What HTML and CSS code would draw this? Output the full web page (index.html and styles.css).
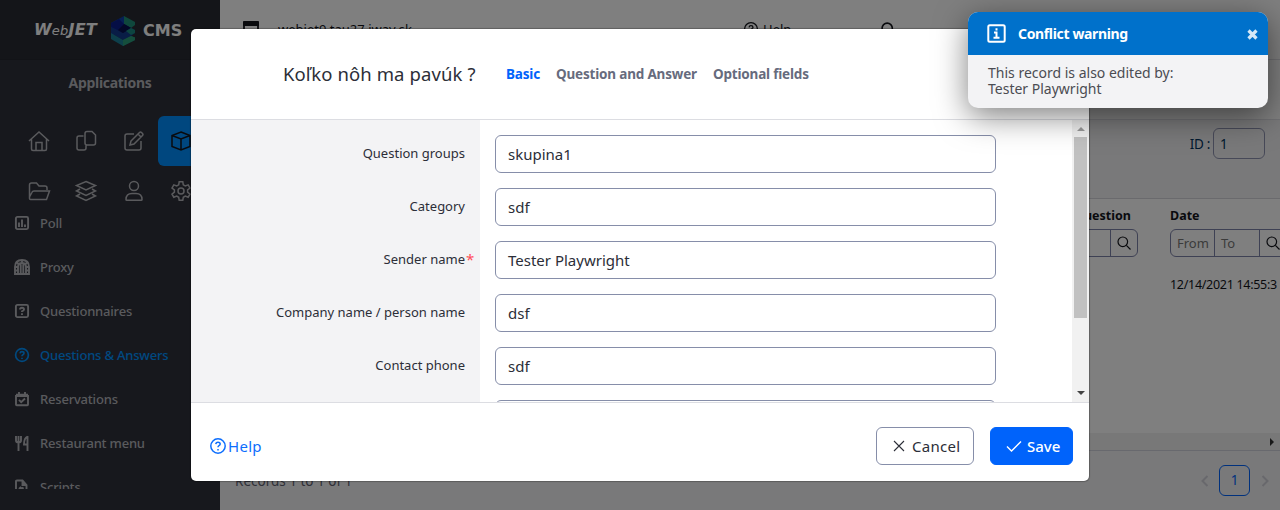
FILE: index.html
```html
<!DOCTYPE html>
<html lang="en">
<head>
<meta charset="utf-8">
<title>WebJET CMS</title>
<link rel="stylesheet" href="styles.css">
</head>
<body>
<svg class="defs" aria-hidden="true">
  <symbol id="help" viewBox="0 0 18 18"><circle cx="9" cy="9" r="7.2"/><path d="M6.800 7.100Q7 5.200 9 5.200Q11.200 5.200 11.200 7Q11.200 8.100 10 8.700Q9 9.200 9 10.300M9 12v1.500"/></symbol>
  <symbol id="search" viewBox="0 0 14 14"><circle cx="5.8" cy="5.8" r="4.8"/><path d="m9.400 9.400 4.100 4.100"/></symbol>
</svg>
<div class="page">
  <aside class="sidebar">
    <div class="logo">
      <span class="logo-web">W<small>eb</small>JET</span>
      <svg class="logo-mark" width="26" height="31" viewBox="0 0 26 31"><path fill="#0a3fa8" d="M1 8 14 1v8L1 23z"/><path fill="#1f8f78" d="m14 1 11 6v3l-4 3-7-4z"/><path fill="#0a1c8c" d="m1 8 8-4 5 5 7 4-8 5-12-6z"/><path fill="#123a8c" d="m1 12 12 6 8-5 4 2v3l-4 3-8 4-12-7z"/><path fill="#06104f" d="m8 15 6-6 7 4-8 5z"/><path fill="#1b8a80" d="m16 16 5-3 4 2v3l-4 2z"/><path fill="#1a7f96" d="m1 18 12 7 8-4 4 1.500V25l-12 6-12-7z"/><path fill="#2a9c78" d="m13 25 8-4 4 1.500V25l-12 6z"/></svg>
      <span class="logo-cms">CMS</span>
    </div>
    <div class="side-title">Applications</div>
    <div class="tiles">
      <span class="tile"><svg width="24" height="24" viewBox="0 0 24 24"><path d="m2 12 10-9 10 9M4.500 10v10q0 1.500 1.500 1.500h12q1.500 0 1.500-1.500V10M9 21v-7.500h6V21"/></svg></span>
      <span class="tile"><svg width="24" height="24" viewBox="0 0 24 24"><path d="M9.500 7H5Q3 7 3 9v10q0 2 2 2h5q2 0 2-2v-2.500M13 2.500h5l3.500 3.500v8q0 2-2 2H13q-2 0-2-2V4.500q0-2 2-2z"/></svg></span>
      <span class="tile"><svg width="24" height="24" viewBox="0 0 24 24"><path d="M12 5H5Q3 5 3 7v12q0 2 2 2h12q2 0 2-2v-7M9 12l8.500-8.500q1-1 2 0l1 1q1 1 0 2L12 15l-4 1zM16 5l3 3"/></svg></span>
      <span class="tile tile-active"><svg width="24" height="24" viewBox="0 0 24 24"><path d="m12 3 9 3.500v11L12 21l-9-3.500v-11zM3 6.500l9 3.500 9-3.500M12 10v11"/></svg></span>
      <span class="tile"><svg width="24" height="24" viewBox="0 0 24 24"><path d="M2.500 18V6q0-2 2-2h5l2.500 3h6q2 0 2 2v2M2.500 18v1.500q0 1 1 1h16L22.500 12H7q-1.500 0-2 1.300z"/></svg></span>
      <span class="tile"><svg width="24" height="24" viewBox="0 0 24 24"><path d="m12 2.500 9.500 4L12 11 2.500 6.500zM6 10l-3.500 2 9.500 4.500 9.500-4.500L18 10M6 15l-3.500 2 9.500 4.500 9.500-4.500L18 15"/></svg></span>
      <span class="tile"><svg width="24" height="24" viewBox="0 0 24 24"><circle cx="12" cy="7" r="4.500"/><path d="M4 20.500q0-6 6-6h4q6 0 6 6 0 .8-.8.8H4.800q-.8 0-.8-.8z"/></svg></span>
      <span class="tile"><svg width="24" height="24" viewBox="0 0 24 24"><circle cx="12" cy="12" r="3"/><path d="M10.200 2.800h3.600l.5 3 2 1.200 2.900-1.100 1.800 3.100-2.400 1.900v2.300l2.400 1.900-1.800 3.100-2.900-1.100-2 1.200-.5 3h-3.600l-.5-3-2-1.200-2.900 1.100L3 15.100l2.400-1.900v-2.300L3 9l1.800-3.100L7.700 7l2-1.200z"/></svg></span>
    </div>
    <nav class="apps">
      <a class="app"><svg width="16" height="16" viewBox="0 0 16 16"><rect x="1.900" y="1.900" width="12.200" height="12.200" rx="1.500"/><path d="M5 7.500V12M8 4.500V12M11 9.500V12"/></svg>Poll</a>
      <a class="app"><svg width="16" height="16" viewBox="0 0 16 16"><path d="M1 15V8q0-7 7-7t7 7v7zM4 15V8q0-4 4-4t4 4v7M6.700 5v10M9.300 5v10M1 8h3M1 11.500h3M12 8h3M12 11.500h3M3 3.500l2 2M13 3.500l-2 2M8 1v3"/></svg>Proxy</a>
      <a class="app"><svg width="16" height="16" viewBox="0 0 16 16"><rect x="1.900" y="1.900" width="12.200" height="12.200" rx="1.500"/><path d="M6 6.500Q6 4.800 8 4.800t2 1.700Q10 7.600 8 8.300V9M8 10.300V12"/></svg>Questionnaires</a>
      <a class="app app-active"><svg width="16" height="16" viewBox="0 0 18 18"><use href="#help"/></svg>Questions &amp; Answers</a>
      <a class="app"><svg width="16" height="16" viewBox="0 0 16 16"><path d="M2 5v8.500q0 .7.700.7h10.600q.7 0 .7-.7V5zM5 8.800l2.200 2.300L11 7.500"/><path d="M2 3.700h12M5 1v4M11 1v4"/></svg>Reservations</a>
      <a class="app"><svg width="16" height="16" viewBox="0 0 16 16"><path d="M2 1v4.500q0 2 2.500 2T7 5.500V1M4.500 1v15M13.500 1v15M13.500 1.500Q10 3 10 9.500h3"/></svg>Restaurant menu</a>
      <a class="app"><svg width="16" height="16" viewBox="0 0 16 16"><path d="M2 14V2.500q0-1 1-1h5.500L12.500 6v8q0 1-1 1H3q-1 0-1-1zM8.500 1.500V6h4M5 10l1.500-1.500L8 10l1.500-1.500"/></svg>Scripts</a>
    </nav>
  </aside>
  <main class="main">
    <header class="topbar">
      <svg class="window-icon" width="16" height="16" viewBox="0 0 16 16"><rect x="1" y="1" width="14" height="14" rx="1"/><path class="solid" d="M0 1q0-1 1-1h14q1 0 1 1v4H0z"/></svg>
      <span class="domain">webjet9.tau27.iway.sk</span>
      <svg class="top-help" width="16" height="16"><use href="#help"/></svg>
      <span>Help</span>
      <svg class="top-search" width="15" height="15"><use href="#search"/></svg>
    </header>
    <div class="breadcrumb"></div>
    <div class="toolbar"><label>ID :</label><span class="id-box">1</span></div>
    <section class="table">
      <div class="col col-question">
        <b>Question</b>
        <div class="filter"><span class="seg seg-q"></span><span class="seg seg-icon"><svg width="14" height="14"><use href="#search"/></svg></span></div>
      </div>
      <div class="col col-date">
        <b>Date</b>
        <div class="filter"><span class="seg seg-from">From</span><span class="seg seg-to">To</span><span class="seg seg-icon"><svg width="14" height="14"><use href="#search"/></svg></span></div>
        <div class="date">12/14/2021 14:55:3</div>
      </div>
    </section>
    <div class="hscroll"><svg width="5" height="8" viewBox="0 0 5 8"><path d="M0 0v8l4-4z"/></svg></div>
    <footer class="pager">
      <span class="records">Records 1 to 1 of 1</span>
      <svg class="chev" width="8" height="12" viewBox="0 0 8 12"><path d="M6.500 1 1.500 6l5 5"/></svg>
      <span class="page-no">1</span>
      <svg class="chev" width="8" height="12" viewBox="0 0 8 12"><path d="m1.500 1 5 5-5 5"/></svg>
    </footer>
  </main>
</div>
<div class="backdrop">
  <div class="modal">
    <header class="modal-head">
      <h5>Koľko nôh ma pavúk ?</h5>
      <span class="tab tab-active">Basic</span><span class="tab tab-question">Question and Answer</span><span class="tab">Optional fields</span>
    </header>
    <div class="modal-body">
      <div class="form">
        <div class="row"><label>Question groups</label><div class="input">skupina1</div></div>
        <div class="row"><label>Category</label><div class="input">sdf</div></div>
        <div class="row"><label>Sender name<i class="star">*</i></label><div class="input">Tester Playwright</div></div>
        <div class="row"><label>Company name / person name</label><div class="input">dsf</div></div>
        <div class="row"><label>Contact phone</label><div class="input">sdf</div></div>
        <div class="row"><label></label><div class="input"></div></div>
      </div>
      <div class="vscroll"><svg width="8" height="4" viewBox="0 0 8 4"><path fill="#999" d="m0 4 4-4 4 4z"/></svg><div class="thumb"></div><svg width="8" height="4" viewBox="0 0 8 4"><path fill="#444" d="m0 0 4 4 4-4z"/></svg></div>
    </div>
    <footer class="modal-foot">
      <a class="help"><svg width="18" height="18"><use href="#help"/></svg>Help</a>
      <span class="btn btn-cancel"><svg width="12" height="12" viewBox="0 0 12 12"><path d="m1 1 10 10M11 1 1 11"/></svg>Cancel</span>
      <span class="btn btn-save"><svg width="16" height="12" viewBox="0 0 16 12"><path d="m1 6.500 4.500 4.500L15 1.500"/></svg>Save</span>
    </footer>
  </div>
</div>
<div class="toast">
  <div class="toast-head">
    <svg width="19" height="19" viewBox="0 0 19 19"><rect x="1.300" y="1.300" width="16.400" height="16.400" rx="1.500"/><path d="M7 8.500h2.500v4.800M6.500 13.800h6M9.500 4.200v2.300"/></svg>
    <b>Conflict warning</b>
    <svg class="close" width="11" height="11" viewBox="0 0 11 11"><path d="m1.500 1.500 8 8M9.500 1.500l-8 8"/></svg>
  </div>
  <div class="toast-body">This record is also edited by:<br>Tester Playwright</div>
</div>
</body>
</html>
```
FILE: styles.css
```css
* { box-sizing: border-box; }
body { margin: 0; height: 510px; overflow: hidden; font: 13px/20px "Noto Sans", "Open Sans", sans-serif; color: #13151b; }
svg { fill: none; stroke: currentColor; stroke-width: 1.5; flex: none; }
.defs { position: absolute; width: 0; height: 0; }

.page { display: flex; width: 1280px; height: 510px; }
.sidebar { width: 220px; background: #2e303a; color: #b4b5ba; flex: none; overflow: hidden; }
.logo { height: 60px; background: #292b33; border-bottom: 1px solid #25272e; display: flex; align-items: center; padding: 2px 0 0 34px; color: #fff; font: bold 16px/20px "DejaVu Sans", sans-serif; }
.logo-web { width: 76px; font-style: italic; letter-spacing: .2px; white-space: nowrap; }
.logo-web small { font-size: 13px; font-weight: 400; }
.logo-mark { stroke: none; }
.logo-cms { padding-left: 7px; letter-spacing: .1px; }
.side-title { height: 56px; padding-top: 13px; text-align: center; font-weight: bold; font-size: 14px; letter-spacing: -.3px; }
.tiles { display: grid; grid-template-columns: repeat(4, 47.5px); grid-template-rows: 50px 48px; margin-left: 15px; }
.tile { height: 50px; display: flex; align-items: center; justify-content: center; border-radius: 6px; }
.tile-active { background: #008fff; color: #13151b; }
.apps { height: 288px; margin-top: -13px; overflow: hidden; }
.app { height: 44px; display: flex; align-items: center; gap: 10px; padding-left: 14px; font-weight: 500; font-size: 13px; letter-spacing: -.2px; }
.app svg { stroke-width: 1.9; }
.app-active { color: #0092ff; }

.main { width: 1060px; background: #fff; overflow: hidden; }
.topbar { height: 60px; border-bottom: 1px solid #e0e0e6; display: flex; align-items: center; padding: 0 0 1px 23px; }
.window-icon { stroke-width: 1.8; }
.solid { fill: currentColor; stroke: none; }
.domain { margin-left: 19px; width: 465px; }
.top-help { margin-right: 4px; }
.top-search { margin-left: 90px; }
.breadcrumb { height: 60px; border-bottom: 1px solid #e0e0e6; }
.toolbar { height: 79px; background: #f3f3f5; border-bottom: 1px solid #d4d4da; display: flex; justify-content: flex-end; padding: 8px 15px 0 0; line-height: 32px; color: #00335f; font-size: 13.5px; }
.toolbar label { letter-spacing: -.3px; }
.id-box { width: 52px; height: 31px; border: 1px solid #8f93b0; border-radius: 6px; margin-left: 3px; padding-left: 6px; line-height: 30px; }
.table { height: 234px; display: flex; padding: 7px 0 0 851px; }
.col { flex: none; }
.col-question { width: 99px; }
.col-question b { padding-left: 3px; }
.col b { display: block; font-size: 12.5px; }
.filter { display: flex; margin-top: 3px; height: 28px; border: 1px solid #7d82a8; border-radius: 6px; width: max-content; color: #777; }
.seg { border-right: 1px solid #7d82a8; padding-left: 6px; line-height: 27px; }
.seg-q { width: 39px; }
.seg-icon { width: 26px; border: 0; padding: 6px 0 0 6px; line-height: 0; color: #13151b; }
.seg-icon svg { stroke-width: 1.2; }
.seg-from { width: 44px; }
.seg-to { width: 45px; }
.date { padding-top: 18px; font-size: 12.5px; line-height: 20px; letter-spacing: -.3px; }
.hscroll { height: 17px; background: #f1f1f1; padding: 5px 5px 0 0; display: flex; justify-content: flex-end; }
.hscroll svg { stroke: none; fill: #333; }
.pager { height: 60px; background: #f3f3f5; border-top: 1px solid #d0d2dd; display: flex; align-items: center; padding: 0 11px 0 15px; color: #5f6170; font-size: 13.5px; }
.records { flex: 1; }
.page-no { width: 31px; height: 31px; border: 1px solid #0063fb; border-radius: 6px; color: #0063fb; text-align: center; line-height: 29px; margin: 0 11px 0 10px; }
.chev { color: #d0d0d8; stroke-width: 2; }

.backdrop { position: absolute; inset: 0; background: rgba(0, 0, 0, .5); padding: 29px 0 0 191px; }
.modal { width: 898px; height: 452px; background: #fff; border-radius: 5px; overflow: hidden; box-shadow: 0 0 1px 1px rgba(0, 0, 0, .25); color: #2c2e38; }
.modal-head { height: 91px; border-bottom: 1px solid #dcdde2; display: flex; align-items: center; padding-left: 92px; }
.modal-head h5 { margin: 0; width: 223px; font-weight: 400; font-size: 18.5px; letter-spacing: .1px; white-space: nowrap; }
.tab { font-size: 13.5px; font-weight: bold; color: #666b7d; margin-right: 16px; letter-spacing: -.18px; }
.tab-active { color: #0063fb; }
.modal-body { height: 282px; display: flex; overflow: hidden; }
.form { width: 881px; padding-top: 15px; background: linear-gradient(90deg, #f3f3f5 289px, #fff 289px); height: 340px; }
.row { height: 53px; display: flex; }
.row label { width: 274px; margin-right: 30px; padding-top: 8px; text-align: right; white-space: nowrap; }
.star { position: absolute; padding-left: 1px; color: #ff4b58; font-style: normal; font-size: 15px; line-height: 20px; }
.input { width: 501px; height: 38px; border: 1px solid #868ea9; border-radius: 6px; padding-left: 12px; font-size: 15px; line-height: 37px; }
.vscroll { width: 17px; height: 282px; background: #f1f1f1; display: flex; flex-direction: column; align-items: center; padding: 7px 0; }
.vscroll svg { stroke: none; }
.thumb { width: 13px; height: 181px; margin: 6px 0 73px; background: #c1c1c1; flex: none; }
.modal-foot { height: 79px; border-top: 1px solid #dcdde2; display: flex; padding: 24px 16px 0 18px; font-size: 15px; line-height: 38px; }
.help { display: flex; align-items: center; height: 38px; gap: 1px; flex: 1; color: #0d6efd; letter-spacing: .3px; }
.btn { height: 38px; border: 1px solid #868ea9; border-radius: 6px; display: flex; align-items: center; }
.btn svg { stroke-width: 1.1; }
.btn-cancel { width: 98px; margin-right: 16px; padding-left: 16px; gap: 7px; letter-spacing: .3px; }
.btn-save { width: 83px; padding-left: 15px; gap: 5px; background: #0063fb; border-color: #0063fb; color: #fff; font-weight: 500; }
.btn-save svg { stroke-width: 1.4; }

.toast { position: absolute; left: 968px; top: 12px; width: 300px; height: 96px; border-radius: 10px; overflow: hidden; background: #f3f3f5; box-shadow: 0 8px 32px rgba(0, 0, 0, .5); color: #4b4c52; }
.toast-head { height: 43px; background: #0071cb; color: #fff; display: flex; align-items: center; padding: 0 10px 0 19px; }
.toast-head svg { stroke-width: 2; }
.toast-head b { flex: 1; padding-left: 12px; font-size: 14px; letter-spacing: -.35px; }
.toast-head .close { stroke-width: 3.2; color: #d5e8f7; margin-top: 2px; }
.toast-body { padding: 10px 20px; font-size: 14px; line-height: 16px; }
```
